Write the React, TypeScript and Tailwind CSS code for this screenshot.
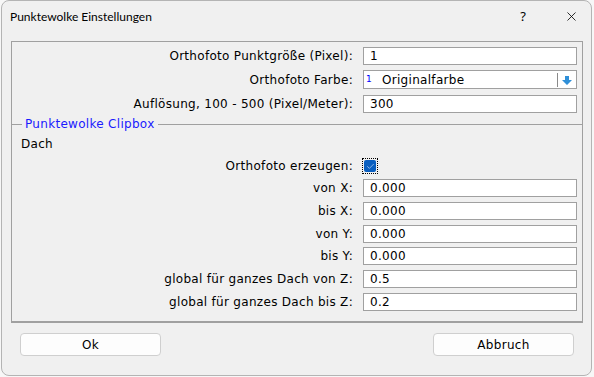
import { Check, X } from 'lucide-react';

const font = { fontFamily: '"DejaVu Sans", Verdana, sans-serif' };

type Row = { label: string; value: string; gap: string };

const topRows: Row[] = [
  { label: 'Orthofoto Punktgröße (Pixel):', value: '1', gap: 'mt-0' },
];

const clipRows: Row[] = [
  { label: 'von X:', value: '0.000', gap: 'mt-[7px]' },
  { label: 'bis X:', value: '0.000', gap: 'mt-[5px]' },
  { label: 'von Y:', value: '0.000', gap: 'mt-[5px]' },
  { label: 'bis Y:', value: '0.000', gap: 'mt-[4px]' },
  { label: 'global für ganzes Dach von Z:', value: '0.5', gap: 'mt-[5px]' },
  { label: 'global für ganzes Dach bis Z:', value: '0.2', gap: 'mt-[5px]' },
];

function Field({ label, value, gap }: Row) {
  return (
    <div className={`grid grid-cols-[341px_214px] gap-x-[10px] items-center h-[18px] ${gap}`}>
      <div className="text-right text-[12px] tracking-[0.3px] text-black whitespace-nowrap">{label}</div>
      <div className="h-[18px] bg-white border border-[#a0a0a0] pl-[6px] text-[12px] tracking-[0.3px] leading-[16px] text-black">{value}</div>
    </div>
  );
}

export default function App() {
  return (
    <div className="w-[594px] h-[377px] bg-[#f7f7f7]" style={font}>
      <div className="ml-[1px] w-[591px] h-[376px] bg-[#f0f0f0] border border-[#b4b4b4] rounded-[8px] flex flex-col">
        <div className="h-[31px] flex items-center pl-[8px] pr-[12px]">
          <span className="text-[12px] text-black" style={{ fontFamily: 'Lato, "Noto Sans", sans-serif' }}>
            Punktewolke Einstellungen
          </span>
          <span className="ml-auto mr-[38px] text-[13px] text-black" style={{ fontFamily: '"Noto Sans", sans-serif' }}>?</span>
          <X size={15} strokeWidth={1.3} className="text-black" />
        </div>

        <div className="mt-[9px] ml-[9px] w-[572px] h-[282px] border border-[#a0a0a0] border-b-2 pt-[5px]">
          {topRows.map(r => <Field key={r.label} {...r} />)}

          <div className="grid grid-cols-[341px_214px] gap-x-[10px] items-center h-[19px] mt-[5px]">
            <div className="text-right text-[12px] tracking-[0.3px] text-black">Orthofoto Farbe:</div>
            <div className="h-[19px] bg-white border border-[#a0a0a0] flex items-center text-[12px] tracking-[0.3px] text-black">
              <span className="w-[18px] pl-[2px] text-[9px] text-[#0000ff] leading-none">1</span>
              <span className="flex-1">Originalfarbe</span>
              <span className="w-px h-[14px] bg-[#8a8a8a]" />
              <svg width="16" height="12" viewBox="0 0 16 12" className="mx-px">
                <path d="M6 2h4v4h3l-5 5-5-5h3z" fill="#2f8fd8" />
              </svg>
            </div>
          </div>

          <Field label="Auflösung, 100 - 500 (Pixel/Meter):" value="300" gap="mt-[6px]" />

          <div className="mt-[4px] h-[14px] flex items-center">
            <span className="w-[10px] h-px bg-[#a0a0a0]" />
            <span className="px-[3px] text-[12px] tracking-[0.3px] text-[#1a1aff] leading-none">Punktewolke Clipbox</span>
            <span className="flex-1 h-px bg-[#a0a0a0]" />
          </div>

          <div className="mt-[6px] pl-[9px] h-[14px] text-[12px] tracking-[0.3px] leading-[14px] text-black">Dach</div>

          <div className="grid grid-cols-[341px_214px] gap-x-[10px] items-center h-[15px] mt-[6px]">
            <div className="text-right text-[12px] tracking-[0.3px] text-black">Orthofoto erzeugen:</div>
            <div className="w-[16px] h-[16px] border border-dotted border-black p-px -ml-px">
              <div className="w-[12px] h-[12px] rounded-[2px] bg-[#0a5fc0] flex items-center justify-center">
                <Check size={9} strokeWidth={1.6} className="text-[#dbe8f8]" />
              </div>
            </div>
          </div>

          {clipRows.map(r => <Field key={r.label} {...r} />)}
        </div>

        <div className="mt-[10px] flex justify-between pl-[18px] pr-[17px]">
          <button className="w-[141px] h-[23px] rounded-[4px] border border-[#cfcfcf] bg-[#fdfdfd] text-[12px] tracking-[0.3px] text-black">Ok</button>
          <button className="w-[141px] h-[23px] rounded-[4px] border border-[#cfcfcf] bg-[#fdfdfd] text-[12px] tracking-[0.3px] text-black">Abbruch</button>
        </div>
      </div>
    </div>
  );
}
